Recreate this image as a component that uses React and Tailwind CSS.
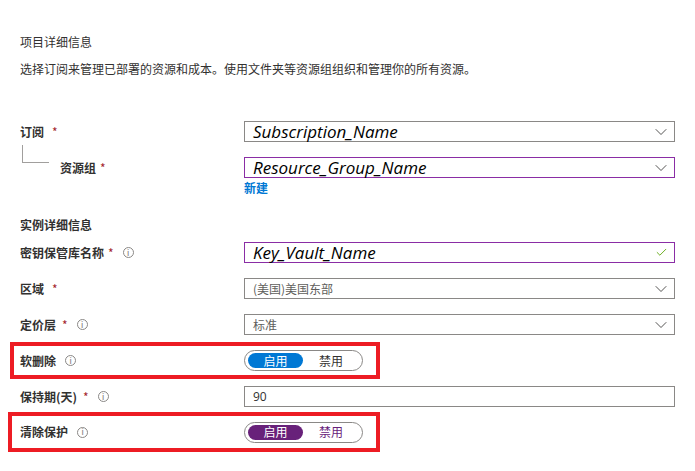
import { ChevronDown, Check } from 'lucide-react'

const font = { fontFamily: '"Noto Sans CJK SC", "Noto Sans", sans-serif' }
const latin = { fontFamily: '"Open Sans", "Noto Sans CJK SC", sans-serif' }

function Info() {
  return (
    <span className="ml-[9px] inline-flex h-[11px] w-[11px] items-center justify-center rounded-full border border-[#8a8886] text-[8px] leading-none text-[#8a8886]" style={latin}>
      i
    </span>
  )
}

function Star({ gap = 'ml-[8px]' }) {
  return <span className={`${gap} text-[12px] font-normal text-[#a4262c]`}>*</span>
}

function Label({ children, star, info, starGap }) {
  return (
    <div className="flex w-[224px] shrink-0 items-center text-[12px] font-semibold text-[#323130]">
      <span>{children}</span>
      {star && <Star gap={starGap} />}
      {info && <Info />}
    </div>
  )
}

function Select({ children, focused, italic, check, dropdown = true }) {
  return (
    <div
      className={`flex h-[21px] flex-1 items-center justify-between border pl-[8px] ${dropdown ? 'pr-[3px]' : 'pr-[6px]'} ${focused ? 'border-[#8a2da5]' : 'border-[#8a8886]'}`}
    >
      {italic ? (
        <span className="text-[17px] italic leading-none text-black" style={{ fontFamily: '"Open Sans", sans-serif' }}>{children}</span>
      ) : (
        <span className="text-[12px] text-[#605e5c]">{children}</span>
      )}
      {dropdown && <ChevronDown size={20} strokeWidth={1} className="text-[#323130]" />}
      {check && <Check size={13} strokeWidth={1.6} className="text-[#57a300]" />}
    </div>
  )
}

function Toggle({ color, offColor }) {
  return (
    <div className="flex h-[21px] w-[119px] items-center rounded-full border border-[#8a8886] px-[3px]">
      <div className={`flex h-[15px] w-[55px] items-center justify-center rounded-full text-[12px] text-white ${color}`}>启用</div>
      <div className={`flex flex-1 items-center justify-center text-[12px] ${offColor}`}>禁用</div>
    </div>
  )
}

export default function App() {
  return (
    <div className="h-[471px] w-[695px] overflow-hidden bg-white px-[20px] pt-[34px]" style={font}>
      <div className="h-[16px] text-[12px] leading-[16px] text-[#323130]">项目详细信息</div>
      <div className="mt-[11px] h-[16px] text-[12px] leading-[16px] text-[#323130]">
        选择订阅来管理已部署的资源和成本。使用文件夹等资源组组织和管理你的所有资源。
      </div>

      <div className="mt-[44px] flex items-center">
        <Label star>订阅</Label>
        <Select italic>Subscription_Name</Select>
      </div>

      <div className="mt-[15px] flex items-center">
        <div className="relative flex w-[224px] shrink-0 items-center pl-[40px] text-[12px] font-semibold text-[#323130]">
          <span className="absolute left-[2px] top-[-14px] h-[18px] w-[27px] border-b border-l border-[#a19f9d]" />
          <span>资源组</span>
          <Star gap="ml-[4px]" />
        </div>
        <Select italic focused>Resource_Group_Name</Select>
      </div>
      <div className="mt-[3px] h-[14px] pl-[224px] text-[12px] font-semibold leading-[14px] text-[#0078d4]">新建</div>

      <div className="mt-[22px] h-[16px] text-[12px] font-bold leading-[16px] text-[#323130]">实例详细信息</div>

      <div className="mt-[9px] flex items-center">
        <Label star info starGap="ml-[4px]">密钥保管库名称</Label>
        <Select italic focused check dropdown={false}>Key_Vault_Name</Select>
      </div>

      <div className="mt-[15px] flex items-center">
        <Label star>区域</Label>
        <Select>(美国)美国东部</Select>
      </div>

      <div className="mt-[15px] flex items-center">
        <Label star info starGap="ml-[6px]">定价层</Label>
        <Select>标准</Select>
      </div>

      <div className="-ml-[10px] mt-[7px] flex h-[37px] w-[370px] items-center border-4 border-[#ed1c24] pl-[6px]">
        <Label info>软删除</Label>
        <Toggle color="bg-[#0078d4]" offColor="text-[#323130]" />
      </div>

      <div className="mt-[7px] flex items-center">
        <Label star info starGap="ml-[6px]">保持期(天)</Label>
        <Select dropdown={false}>
          <span className="text-[#323130]" style={latin}>90</span>
        </Select>
      </div>

      <div className="-ml-[12px] mt-[5px] flex h-[40px] w-[372px] items-center border-4 border-[#ed1c24] pl-[8px]">
        <Label info>清除保护</Label>
        <Toggle color="bg-[#68217a]" offColor="text-[#68217a]" />
      </div>
    </div>
  )
}
